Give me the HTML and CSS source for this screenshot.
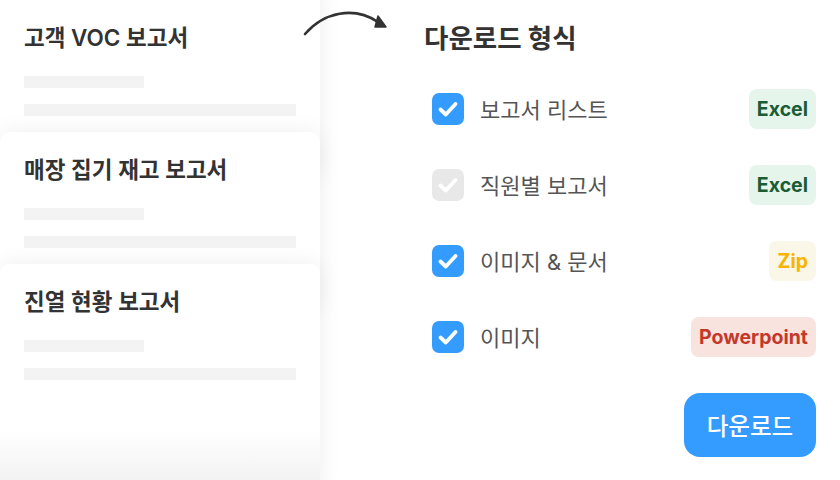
FILE: index.html
```html
<!DOCTYPE html>
<html lang="ko">
<head>
    <meta charset="UTF-8">
    <meta name="viewport" content="width=device-width, initial-scale=1.0">
    <title>다운로드 형식</title>
    <link rel="stylesheet" href="styles.css">
</head>
<body>
    <div class="reports">
        <div class="report first">
            <h3>고객 VOC 보고서</h3>
            <div class="line short"></div>
            <div class="line"></div>
        </div>
        <div class="report">
            <h3>매장 집기 재고 보고서</h3>
            <div class="line short"></div>
            <div class="line"></div>
        </div>
        <div class="report last">
            <h3>진열 현황 보고서</h3>
            <div class="line short"></div>
            <div class="line"></div>
        </div>
    </div>

    <!-- curved arrow between the two panels -->
    <svg class="arrow" width="100" height="40" viewBox="0 0 100 40">
        <path d="M15 34 C 34 12, 64 6, 88 22" fill="none" stroke="#333" stroke-width="2.6" stroke-linecap="round"/>
        <path d="M88 16 L96 27 L85 27 Z" fill="#333" stroke="#333" stroke-width="1.5" stroke-linejoin="round"/>
    </svg>

    <div class="download">
        <h2>다운로드 형식</h2>

        <div class="option">
            <span class="check"><svg viewBox="0 0 32 32"><path d="M8.5 16.5 L13.8 21.5 L23.5 11"/></svg></span>
            <span class="label">보고서 리스트</span>
            <span class="badge excel">Excel</span>
        </div>
        <div class="option">
            <span class="check off"><svg viewBox="0 0 32 32"><path d="M8.5 16.5 L13.8 21.5 L23.5 11"/></svg></span>
            <span class="label">직원별 보고서</span>
            <span class="badge excel">Excel</span>
        </div>
        <div class="option">
            <span class="check"><svg viewBox="0 0 32 32"><path d="M8.5 16.5 L13.8 21.5 L23.5 11"/></svg></span>
            <span class="label">이미지 &amp; 문서</span>
            <span class="badge zip">Zip</span>
        </div>
        <div class="option">
            <span class="check"><svg viewBox="0 0 32 32"><path d="M8.5 16.5 L13.8 21.5 L23.5 11"/></svg></span>
            <span class="label">이미지</span>
            <span class="badge ppt">Powerpoint</span>
        </div>

        <div class="actions">
            <button>다운로드</button>
        </div>
    </div>
</body>
</html>
```

FILE: styles.css
```css
body {
    margin: 0;
    width: 840px;
    height: 480px;
    overflow: hidden;
    display: flex;
    background: #fff;
    color: #333;
    font-family: Inter, "Noto Sans CJK KR", sans-serif;
    position: relative;
}

.reports {
    width: 320px;
    flex-shrink: 0;
}

.report {
    position: relative;
    height: 180px;
    margin-bottom: -48px;
    padding: 24px;
    box-sizing: border-box;
    background: #fff;
    border-radius: 10px;
    box-shadow: 0 0 22px rgba(0, 0, 0, 0.07);
}

.report.first {
    height: 200px;
    margin-top: -20px;
    padding-top: 44px;
}

.report.last {
    height: 230px;
    background: linear-gradient(to bottom, #fff 165px, #f3f3f3 216px);
}

.report h3 {
    margin: 0;
    height: 28px;
    line-height: 28px;
    font-size: 22.5px;
    font-weight: 600;
    color: #333;
}

.line {
    height: 12px;
    width: 272px;
    margin-top: 16px;
    background: #f3f3f3;
}

.line.short {
    width: 120px;
    margin-top: 24px;
}

.arrow {
    position: absolute;
    left: 290px;
    top: 0;
}

.download {
    margin-left: 104px;
    width: 392px;
    padding-top: 22px;
}

.download h2 {
    margin: 0 0 35px;
    height: 32px;
    line-height: 32px;
    font-size: 26.5px;
    font-weight: 700;
    color: #333;
}

.option {
    display: flex;
    align-items: center;
    height: 40px;
    margin-bottom: 36px;
    padding-left: 8px;
}

.check {
    width: 32px;
    height: 32px;
    border-radius: 7px;
    background: #359cff;
    display: flex;
}

.check.off {
    background: #e8e8e8;
}

.check svg {
    width: 32px;
    height: 32px;
}

.check path {
    fill: none;
    stroke: #fff;
    stroke-width: 3.8;
    stroke-linecap: round;
    stroke-linejoin: round;
}

.label {
    flex: 1;
    margin-left: 16px;
    margin-top: -2px;
    font-size: 22px;
    color: #555;
}

.badge {
    height: 40px;
    line-height: 40px;
    padding: 0 8px;
    border-radius: 8px;
    font-size: 19.5px;
    font-weight: 700;
}

.excel { background: #e6f5ec; color: #1a5c34; }
.zip { background: #faf6e8; color: #f7b500; }
.ppt { background: #f9e3df; color: #c4382a; }

.actions {
    display: flex;
    justify-content: flex-end;
    margin-top: 9px;
}

button {
    width: 132px;
    height: 64px;
    border: none;
    border-radius: 16px;
    background: #359cff;
    color: #fff;
    font-family: inherit;
    font-size: 23.5px;
    font-weight: 500;
    cursor: pointer;
}
```
